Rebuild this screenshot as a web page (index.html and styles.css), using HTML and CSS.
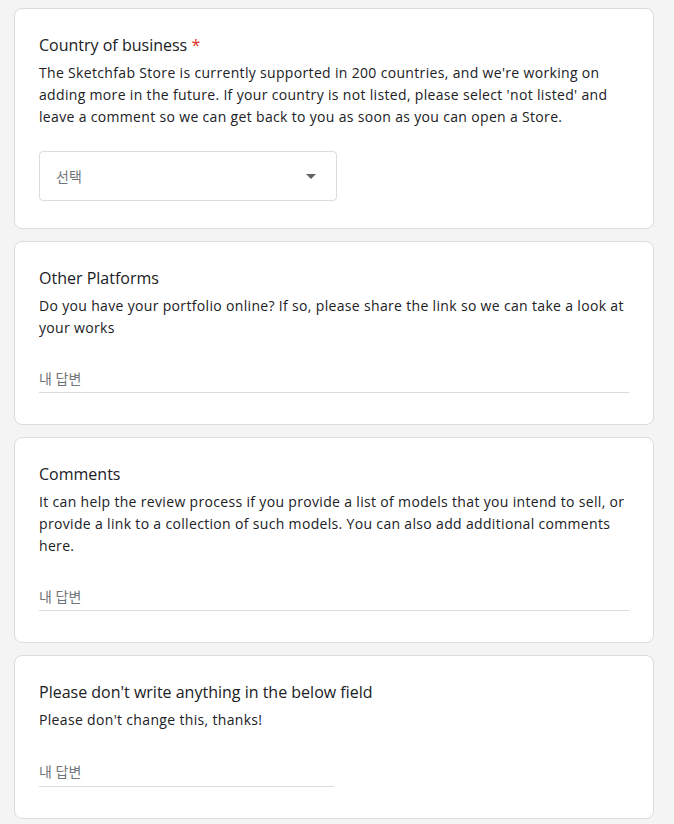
FILE: index.html
```html
<!DOCTYPE html>
<html lang="ko">
<head>
<meta charset="utf-8">
<title>Form</title>
<link rel="stylesheet" href="styles.css">
</head>
<body>
<main class="form">
  <section class="card card-select">
    <div class="title">Country of business <span class="req">*</span></div>
    <div class="desc">The Sketchfab Store is currently supported in 200 countries, and we're working on adding more in the future. If your country is not listed, please select 'not listed' and leave a comment so we can get back to you as soon as you can open a Store.</div>
    <div class="select">
      <span class="select-text">선택</span>
      <svg class="arrow" width="10" height="5" viewBox="0 0 10 5"><path d="M0 0h10L5 5z" fill="#5f6368"/></svg>
    </div>
  </section>
  <section class="card">
    <div class="title">Other Platforms</div>
    <div class="desc">Do you have your portfolio online? If so, please share the link so we can take a look at your works</div>
    <div class="answer"><span class="placeholder">내 답변</span></div>
  </section>
  <section class="card">
    <div class="title">Comments</div>
    <div class="desc">It can help the review process if you provide a list of models that you intend to sell, or provide a link to a collection of such models. You can also add additional comments here.</div>
    <div class="answer"><span class="placeholder">내 답변</span></div>
  </section>
  <section class="card">
    <div class="title">Please don't write anything in the below field</div>
    <div class="desc">Please don't change this, thanks!</div>
    <div class="answer half"><span class="placeholder">내 답변</span></div>
  </section>
</main>
</body>
</html>
```

FILE: styles.css
```css
html, body {
  margin: 0;
  padding: 0;
  background: #f4f4f4;
}
body {
  font-family: "Open Sans", "Noto Sans CJK KR", sans-serif;
  color: #202124;
}
.form {
  display: flex;
  flex-direction: column;
  gap: 12px;
  padding: 8px 20px 0 14px;
}
.card {
  background: #fff;
  border: 1px solid #dadce0;
  border-radius: 8px;
  padding: 24px 24px 31px;
}
.card-select {
  padding-bottom: 27px;
}
.title {
  font-size: 16px;
  line-height: 24px;
}
.req {
  color: #d93025;
}
.desc {
  font-size: 14px;
  line-height: 22px;
  letter-spacing: 0.33px;
  margin-top: 5px;
}
.select {
  margin-top: 23px;
  height: 48px;
  width: 260px;
  border: 1px solid #dadce0;
  border-radius: 4px;
  display: flex;
  align-items: center;
  justify-content: space-between;
  padding: 0 20px 0 16px;
}
.select-text {
  font-size: 14px;
  color: #70757a;
}
.answer {
  margin-top: 27px;
  border-bottom: 1px solid #dadce0;
  padding-bottom: 1px;
  line-height: 24px;
}
.answer.half {
  width: 295px;
  margin-top: 28px;
  padding-bottom: 2px;
}
.placeholder {
  font-size: 14px;
  color: #70757a;
}
```
